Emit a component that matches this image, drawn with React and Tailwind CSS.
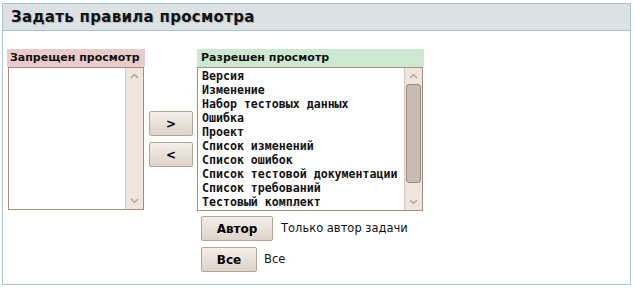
import React from 'react';

const allowed = [
  'Версия',
  'Изменение',
  'Набор тестовых данных',
  'Ошибка',
  'Проект',
  'Список изменений',
  'Список ошибок',
  'Список тестовой документации',
  'Список требований',
  'Тестовый комплект',
];

const Chevron = ({ up }) => (
  <svg width="9" height="6" viewBox="0 0 9 6" className="block">
    <path
      d={up ? 'M1 5 L4.5 1.5 L8 5' : 'M1 1 L4.5 4.5 L8 1'}
      fill="none"
      stroke="#a89c90"
      strokeWidth="1.2"
    />
  </svg>
);

const ScrollBar = ({ thumb }) => (
  <div className="w-[18px] h-full bg-[#ede5de] border-l border-[#d3c8bd] flex flex-col items-center">
    <div className="h-[16px] flex items-center justify-center">
      <Chevron up />
    </div>
    <div className="flex-1 w-full px-[1px]">
      {thumb && (
        <div className="w-full h-[99px] bg-[#c9bbad] border border-[#9d8b7b] rounded-[3px]" />
      )}
    </div>
    <div className="h-[16px] flex items-center justify-center">
      <Chevron />
    </div>
  </div>
);

const Button = ({ children, w }) => (
  <button
    className={`${w} h-[25px] border border-[#b5a596] rounded-[2px] bg-gradient-to-b from-[#f4efea] to-[#ddd3c9] text-[12px] font-bold text-black`}
  >
    {children}
  </button>
);

export default function App() {
  return (
    <div className="w-[634px] h-[290px] bg-white pt-[3px] pl-[2px] font-['DejaVu_Sans',sans-serif]">
      <div className="w-[629px] h-[282px] border border-[#a9c5d5]">
        <div className="h-[27px] bg-[#dce1e4] border-b border-[#a9c5d5] pl-[8px] flex items-center">
          <h1 className="text-[15px] font-bold text-[#111] tracking-[0.3px] [text-shadow:1px_1px_0_#b4bcc2]">
            Задать правила просмотра
          </h1>
        </div>

        <div className="flex pl-[4px] pt-[18px]">
          <div className="w-[138px]">
            <div className="h-[18px] bg-[#e9cbcb] text-[11px] font-bold text-[#111] pl-[3px] leading-[18px] whitespace-nowrap overflow-hidden">
              Запрещен просмотр
            </div>
            <div className="h-[143px] mx-[1px] border border-[#a58f7c] bg-white flex justify-end">
              <ScrollBar />
            </div>
          </div>

          <div className="w-[44px] ml-[4px] flex flex-col gap-[6px] pt-[62px]">
            <Button w="w-[44px]">&gt;</Button>
            <Button w="w-[44px]">&lt;</Button>
          </div>

          <div className="ml-[4px] w-[227px]">
            <div className="h-[18px] bg-[#cde8d1] text-[11px] font-bold text-[#111] pl-[4px] leading-[18px] whitespace-nowrap">
              Разрешен просмотр
            </div>
            <div className="h-[144px] w-[226px] border border-[#a58f7c] bg-white flex">
              <ul className="flex-1 pl-[4px] pt-[1px] font-['DejaVu_Sans_Mono',monospace] text-[11.6px] font-bold leading-[14px] text-[#111]">
                {allowed.map((a) => (
                  <li key={a} className="whitespace-nowrap">{a}</li>
                ))}
              </ul>
              <ScrollBar thumb />
            </div>

            <div className="flex items-center mt-[5px] pl-[4px] gap-[8px]">
              <Button w="w-[72px]">Автор</Button>
              <span className="text-[11.5px] text-[#111]">Только автор задачи</span>
            </div>
            <div className="flex items-center mt-[6px] pl-[4px] gap-[7px]">
              <Button w="w-[56px]">Все</Button>
              <span className="text-[11.5px] text-[#111]">Все</span>
            </div>
          </div>
        </div>
      </div>
    </div>
  );
}
